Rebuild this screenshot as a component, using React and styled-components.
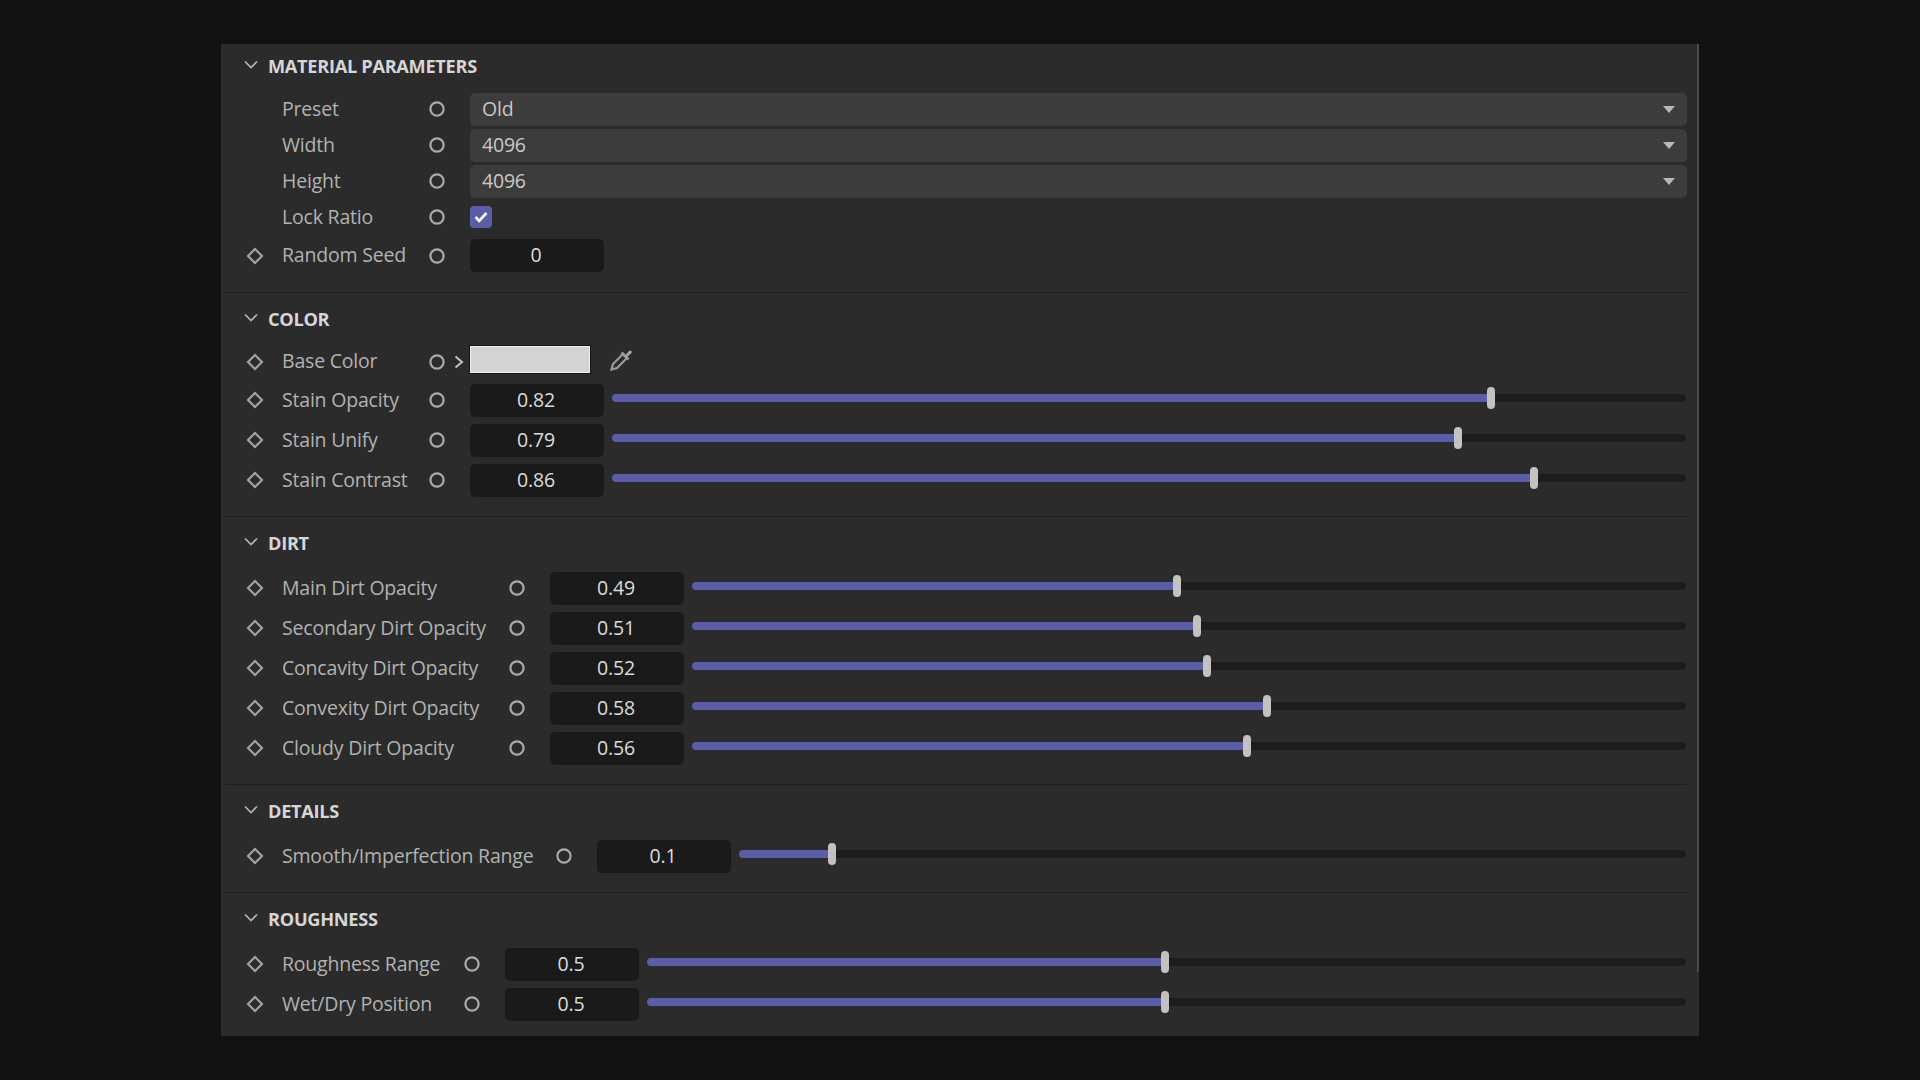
import React from "react";
import styled, { createGlobalStyle } from "styled-components";

const GlobalStyle = createGlobalStyle`
	html, body {
		margin: 0;
		background: #121212;
		font-family: "Open Sans", "Liberation Sans", sans-serif;
	}
`;

const Page = styled.div`
	width: 1920px;
	height: 1080px;
	padding: 44px 221px 0;
	box-sizing: border-box;
	overflow: hidden;
`;

const Panel = styled.div`
	position: relative;
	width: 1478px;
	height: 992px;
	background: #2b2b2b;
	box-sizing: border-box;
	padding: 0 12px 0 4px;
`;

const ScrollEdge = styled.div`
	position: absolute;
	top: 0;
	right: 0;
	width: 2px;
	height: 928px;
	background: #4c4c4c;
`;

const Section = styled.section`
	padding: ${(props) => (props.$first ? "0" : "4px")} 0 ${(props) => (props.$last ? "0" : "16px")};
	border-bottom: ${(props) => (props.$last ? "none" : "1px solid #1e1e1e")};
`;

const Header = styled.div`
	display: flex;
	align-items: center;
	height: 44px;
	margin-bottom: ${(props) => props.$gap ?? 3}px;
	padding-left: 19px;
`;

const HeaderChevron = styled.svg`
	margin-top: -4px;
`;

const HeaderTitle = styled.span`
	margin-left: 10px;
	font-size: 18.2px;
	font-weight: 700;
	color: #d6d6d6;
	letter-spacing: -0.3px;
`;

const Row = styled.div`
	display: flex;
	align-items: center;
	height: ${(props) => props.$height ?? 40}px;
`;

const KeySlot = styled.div`
	display: flex;
	align-items: center;
	justify-content: center;
	width: 60px;
	margin-right: -3px;
	flex: none;
`;

const Label = styled.span`
	width: ${(props) => props.$width ?? 140}px;
	flex: none;
	padding-bottom: 2px;
	font-size: 19.5px;
	color: #b2b2b2;
	white-space: nowrap;
	letter-spacing: -0.2px;
`;

const AnimSlot = styled.div`
	position: relative;
	display: flex;
	align-items: center;
	justify-content: center;
	width: 30px;
	margin-right: 18px;
	flex: none;
`;

const ExpandArrow = styled.svg`
	position: absolute;
	left: 32px;
	top: 1px;
`;

const Select = styled.div`
	flex: 1;
	display: flex;
	align-items: center;
	justify-content: space-between;
	height: 33px;
	padding: 0 12px 2px 12px;
	box-sizing: border-box;
	background: #3c3c3c;
	border-radius: 5px;
	font-size: 19.5px;
	color: #c8c8c8;
	letter-spacing: -0.2px;
`;

const Caret = styled.span`
	margin-top: 2px;
	width: 0;
	height: 0;
	border-left: 6.5px solid transparent;
	border-right: 6.5px solid transparent;
	border-top: 7px solid #b9b9b9;
`;

const Checkbox = styled.div`
	display: flex;
	align-items: center;
	justify-content: center;
	width: 22px;
	height: 22px;
	background: #5a5ea8;
	border-radius: 4px;
`;

const NumberBox = styled.div`
	width: 134px;
	height: 33px;
	flex: none;
	display: flex;
	align-items: center;
	justify-content: center;
	padding: 0 2px 2px 0;
	box-sizing: border-box;
	background: #1a1a1a;
	border-radius: 5px;
	font-size: 19.5px;
	color: #dcdcdc;
	letter-spacing: -0.2px;
`;

const Track = styled.div`
	position: relative;
	flex: 1;
	height: 8px;
	margin: -4px 1px 0 8px;
	background: #1c1c1c;
	border-radius: 4px;
`;

const Fill = styled.div`
	height: 100%;
	background: #5a5ea8;
	border-radius: 4px 0 0 4px;
`;

const Handle = styled.div`
	position: absolute;
	top: -7px;
	width: 8px;
	height: 22px;
	margin-left: -6px;
	background: #c2c2c2;
	border-radius: 4px;
`;

const Swatch = styled.div`
	width: 120px;
	height: 27px;
	margin-top: -5px;
	box-sizing: border-box;
	background: #d4d4d4;
	border: 1px solid #f0f0f0;
	outline: 1px solid #141414;
`;

const Picker = styled.svg`
	margin: -4px 0 0 18px;
`;

const Chevron = () => (
	<HeaderChevron width="14" height="9" viewBox="0 0 14 9" fill="none">
		<path d="M1 1.5 L7 7.5 L13 1.5" stroke="#b4b4b4" strokeWidth="1.7" />
	</HeaderChevron>
);

const Diamond = () => (
	<svg width="18" height="18" viewBox="0 0 18 18" fill="none">
		<path d="M9 2 L16 9 L9 16 L2 9 Z" stroke="#a4a4a4" strokeWidth="2.1" />
	</svg>
);

const Circle = () => (
	<svg width="16" height="16" viewBox="0 0 16 16" fill="none">
		<circle cx="8" cy="8" r="6.6" stroke="#ababab" strokeWidth="2.2" />
	</svg>
);

const Param = ({ name, keyed = true, labelWidth, height, arrow, children }) => (
	<Row $height={height}>
		<KeySlot>{keyed && <Diamond />}</KeySlot>
		<Label $width={labelWidth}>{name}</Label>
		<AnimSlot>
			<Circle />
			{arrow && (
				<ExpandArrow width="10" height="14" viewBox="0 0 10 14" fill="none">
					<path d="M1.5 1.5 L8 7 L1.5 12.5" stroke="#c4c4c4" strokeWidth="2" />
				</ExpandArrow>
			)}
		</AnimSlot>
		{children}
	</Row>
);

const SliderParam = ({ name, value, labelWidth }) => (
	<Param name={name} labelWidth={labelWidth}>
		<NumberBox>{value}</NumberBox>
		<Track>
			<Fill style={{ width: `${value * 100}%` }} />
			<Handle style={{ left: `${value * 100}%` }} />
		</Track>
	</Param>
);

const colorSliders = [
	["Stain Opacity", 0.82],
	["Stain Unify", 0.79],
	["Stain Contrast", 0.86],
];

const dirtSliders = [
	["Main Dirt Opacity", 0.49],
	["Secondary Dirt Opacity", 0.51],
	["Concavity Dirt Opacity", 0.52],
	["Convexity Dirt Opacity", 0.58],
	["Cloudy Dirt Opacity", 0.56],
];

const roughnessSliders = [
	["Roughness Range", 0.5],
	["Wet/Dry Position", 0.5],
];

const SectionHead = ({ title, gap }) => (
	<Header $gap={gap}>
		<Chevron />
		<HeaderTitle>{title}</HeaderTitle>
	</Header>
);

export default function App() {
	return (
		<Page>
			<GlobalStyle />
			<Panel>
				<ScrollEdge />
				<Section $first>
					<SectionHead title="MATERIAL PARAMETERS" />
					{[
						["Preset", "Old"],
						["Width", "4096"],
						["Height", "4096"],
					].map(([name, value]) => (
						<Param key={name} name={name} keyed={false} height={36}>
							<Select>
								{value}
								<Caret />
							</Select>
						</Param>
					))}
					<Param name="Lock Ratio" keyed={false} height={36}>
						<Checkbox>
							<svg width="14" height="12" viewBox="0 0 14 12" fill="none">
								<path d="M1.5 6 L5.2 9.8 L12.5 2" stroke="#ffffff" strokeWidth="2.6" />
							</svg>
						</Checkbox>
					</Param>
					<Param name="Random Seed" height={41}>
						<NumberBox>0</NumberBox>
					</Param>
				</Section>
				<Section>
					<SectionHead title="COLOR" gap={2} />
					<Param name="Base Color" height={37} arrow>
						<Swatch />
						<Picker width="26" height="26" viewBox="0 0 26 26" fill="none">
							<path d="M3.5 22.5 L5 17 L15 7 L19 11 L9 21 Z" stroke="#9a9a9a" strokeWidth="2.2" />
							<path d="M13.5 5.5 L20.5 12.5" stroke="#9a9a9a" strokeWidth="2.8" />
							<path d="M17 8.5 L21 4 Q22.5 3 23.5 4 Q24.5 5.5 23 6.5 L18.5 10.5 Z" fill="#a6a6a6" />
						</Picker>
					</Param>
					{colorSliders.map(([name, value]) => (
						<SliderParam key={name} name={name} value={value} />
					))}
				</Section>
				<Section>
					<SectionHead title="DIRT" />
					{dirtSliders.map(([name, value]) => (
						<SliderParam key={name} name={name} value={value} labelWidth={220} />
					))}
				</Section>
				<Section>
					<SectionHead title="DETAILS" />
					<SliderParam name="Smooth/Imperfection Range" value={0.1} labelWidth={267} />
				</Section>
				<Section $last>
					<SectionHead title="ROUGHNESS" />
					{roughnessSliders.map(([name, value]) => (
						<SliderParam key={name} name={name} value={value} labelWidth={175} />
					))}
				</Section>
			</Panel>
		</Page>
	);
}
